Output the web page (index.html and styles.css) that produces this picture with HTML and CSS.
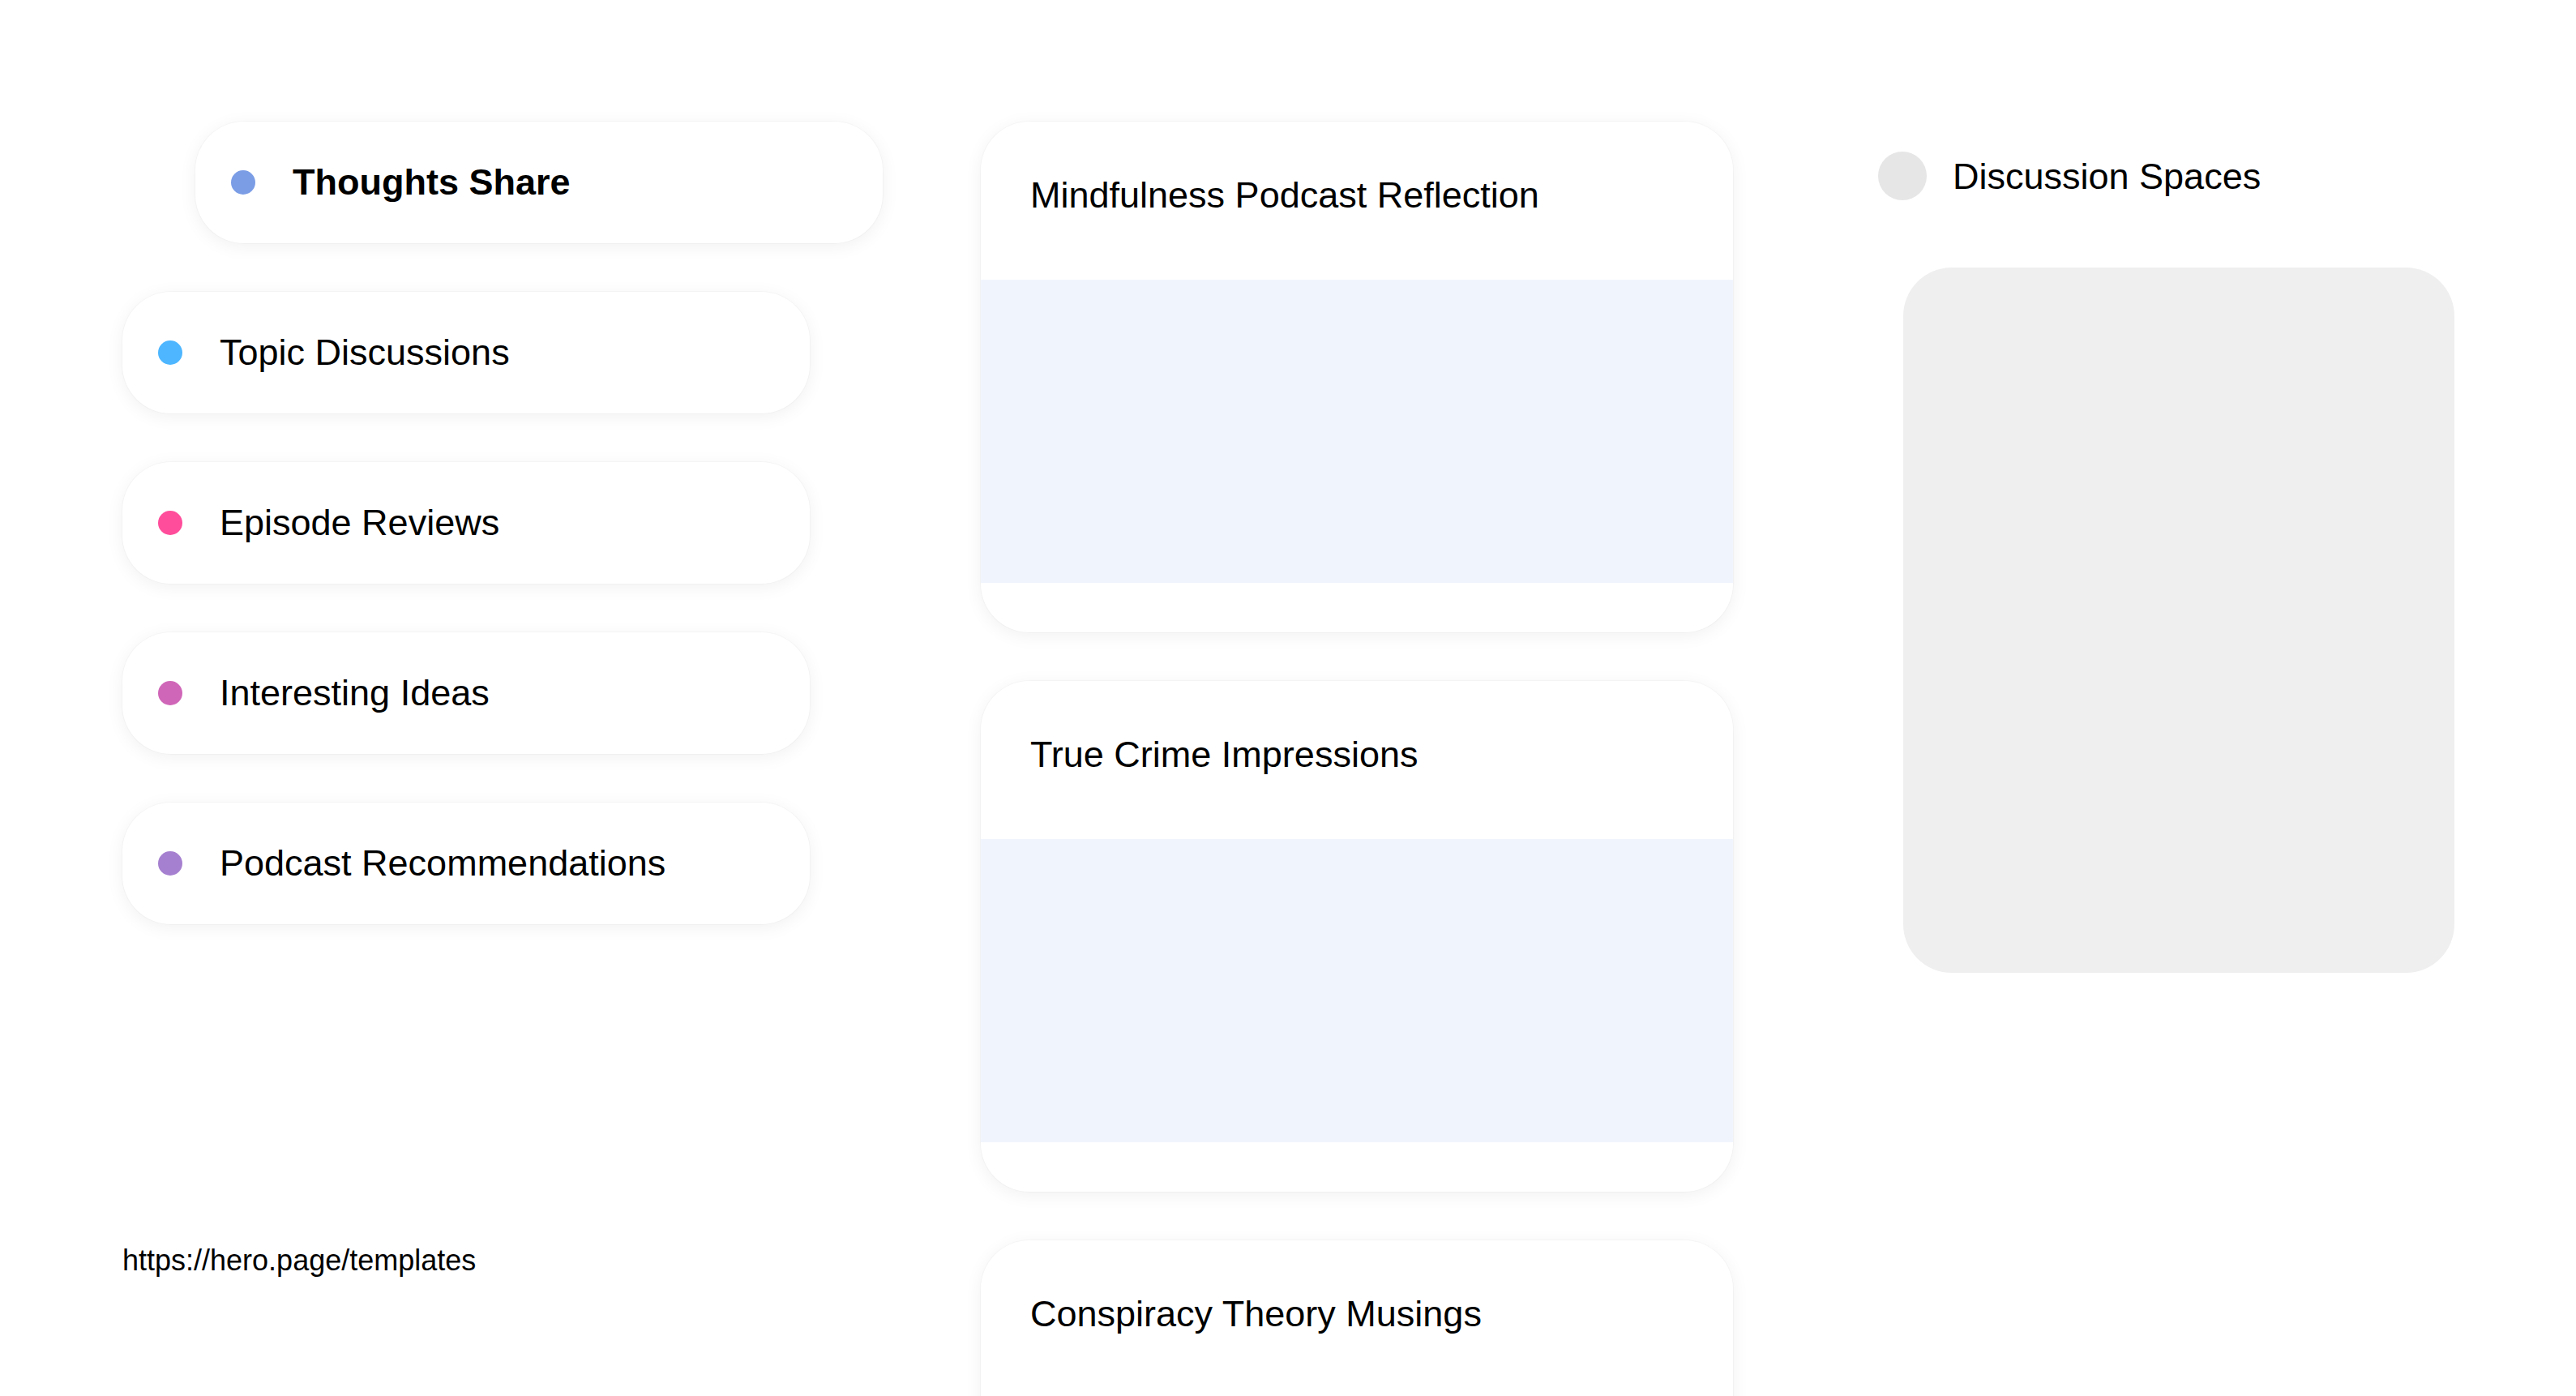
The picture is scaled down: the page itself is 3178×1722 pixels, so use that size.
FILE: index.html
```html
<!DOCTYPE html>
<html lang="en">
<head>
<meta charset="utf-8">
<title>Thoughts Share</title>
<link rel="stylesheet" href="styles.css">
</head>
<body>
<div class="page">
  <aside class="nav">
    <div class="nav-item nav-item-active"><span class="dot dot-thoughts"></span><span class="nav-label">Thoughts Share</span></div>
    <div class="nav-item"><span class="dot dot-topic"></span><span class="nav-label">Topic Discussions</span></div>
    <div class="nav-item"><span class="dot dot-episode"></span><span class="nav-label">Episode Reviews</span></div>
    <div class="nav-item"><span class="dot dot-ideas"></span><span class="nav-label">Interesting Ideas</span></div>
    <div class="nav-item"><span class="dot dot-recs"></span><span class="nav-label">Podcast Recommendations</span></div>
    <div class="footer-link">https://hero.page/templates</div>
  </aside>
  <main class="feed">
    <article class="post">
      <div class="post-head"><h2 class="post-title">Mindfulness Podcast Reflection</h2></div>
      <div class="post-media"></div>
      <div class="post-foot"></div>
    </article>
    <article class="post">
      <div class="post-head"><h2 class="post-title">True Crime Impressions</h2></div>
      <div class="post-media"></div>
      <div class="post-foot"></div>
    </article>
    <article class="post">
      <div class="post-head"><h2 class="post-title">Conspiracy Theory Musings</h2></div>
      <div class="post-media"></div>
      <div class="post-foot"></div>
    </article>
  </main>
  <section class="spaces">
    <div class="spaces-head"><span class="spaces-avatar"></span><span class="spaces-title">Discussion Spaces</span></div>
    <div class="spaces-panel"></div>
  </section>
</div>
</body>
</html>
```

FILE: styles.css
```css
html, body {
  margin: 0;
  padding: 0;
  background: #ffffff;
  height: 1722px;
  overflow: hidden;
}

body {
  font-family: "Liberation Sans", Arial, sans-serif;
  color: #000000;
}

.page {
  display: flex;
  align-items: flex-start;
  padding: 150px 0 0 151px;
}

/* Left navigation */
.nav {
  width: 848px;
  margin-right: 211px;
  display: flex;
  flex-direction: column;
  gap: 60px;
  flex-shrink: 0;
}

.nav-item {
  box-sizing: border-box;
  width: 848px;
  height: 150px;
  display: flex;
  align-items: center;
  gap: 46px;
  padding-left: 44px;
  background: #ffffff;
  border-radius: 60px;
  box-shadow: 0 0 0 1px rgba(0, 0, 0, 0.025), 0 4px 22px rgba(0, 0, 0, 0.06);
}

.nav-item-active {
  margin-left: 90px;
}

.nav-item-active .nav-label {
  font-weight: 700;
}

.dot {
  width: 30px;
  height: 30px;
  border-radius: 50%;
  flex-shrink: 0;
}

.dot-thoughts { background: #7b9de6; }
.dot-topic { background: #4db6ff; }
.dot-episode { background: #ff4d9b; }
.dot-ideas { background: #d066b8; }
.dot-recs { background: #a680d0; }

.nav-label {
  font-size: 45px;
  line-height: 1.2;
}

.footer-link {
  margin-top: 334px;
  font-size: 36px;
  line-height: 41px;
}

/* Middle feed */
.feed {
  width: 928px;
  margin-right: 179px;
  display: flex;
  flex-direction: column;
  gap: 60px;
  flex-shrink: 0;
}

.post {
  background: #ffffff;
  border-radius: 60px;
  overflow: hidden;
  box-shadow: 0 0 0 1px rgba(0, 0, 0, 0.025), 0 4px 22px rgba(0, 0, 0, 0.06);
}

.post-head {
  box-sizing: border-box;
  height: 195px;
  padding: 64px 60px 0 61px;
}

.post-title {
  margin: 0;
  font-size: 45px;
  font-weight: 400;
  line-height: 53px;
}

.post-media {
  height: 374px;
  background: #f0f5fd;
}

.post-foot {
  height: 61px;
}

/* Right column */
.spaces {
  width: 711px;
  padding-top: 37px;
  flex-shrink: 0;
}

.spaces-head {
  display: flex;
  align-items: center;
  gap: 32px;
  height: 60px;
}

.spaces-avatar {
  width: 60px;
  height: 60px;
  border-radius: 50%;
  background: #e6e6e6;
  flex-shrink: 0;
}

.spaces-title {
  font-size: 45px;
  line-height: 49px;
}

.spaces-panel {
  margin: 83px 0 0 31px;
  width: 680px;
  height: 870px;
  border-radius: 60px;
  background: #efefef;
}
```
